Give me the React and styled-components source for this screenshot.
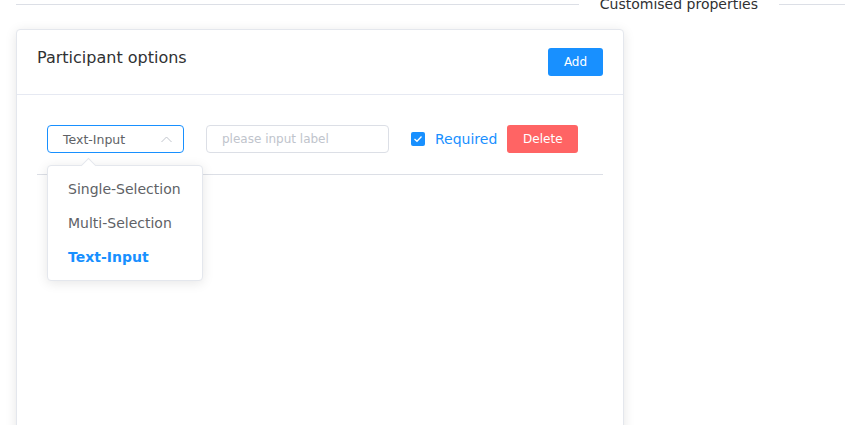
import styled, { createGlobalStyle } from "styled-components";

const GlobalStyle = createGlobalStyle`
  html, body {
    margin: 0;
    padding: 0;
    background: #fff;
    overflow: hidden;
  }
  body {
    font-family: "DejaVu Sans", Verdana, sans-serif;
    color: #303133;
  }
`;

const Page = styled.div`
  width: 845px;
  height: 425px;
  overflow: hidden;
`;

const Divider = styled.div`
  display: flex;
  align-items: center;
  height: 18px;
  margin-top: -5px;
  padding-left: 16px;
`;

const Line = styled.div`
  height: 1px;
  background: #dcdfe6;
  flex: ${(p) => (p.$grow ? 1 : "none")};
  width: ${(p) => (p.$grow ? "auto" : "66px")};
`;

const DividerText = styled.span`
  padding: 0 21px;
  font-size: 14px;
  line-height: 18px;
  color: #303133;
  white-space: nowrap;
`;

const Card = styled.div`
  margin: 16px 0 0 16px;
  width: 606px;
  height: 420px;
  border: 1px solid #e4e7ed;
  border-radius: 4px;
  background: #fff;
  box-shadow: 0 2px 12px rgba(0, 0, 0, 0.1);
`;

const CardHeader = styled.div`
  display: flex;
  justify-content: space-between;
  align-items: flex-start;
  padding: 16px 20px 18px;
  border-bottom: 1px solid #e6e9f2;
`;

const Title = styled.div`
  font-size: 16px;
  line-height: 24px;
  color: #303133;
`;

const Button = styled.button`
  border: none;
  border-radius: 3px;
  color: #fff;
  font-family: inherit;
  font-size: 12px;
  height: 28px;
  padding: 0;
  width: ${(p) => p.$w}px;
  margin-top: ${(p) => p.$mt || 0}px;
  background: ${(p) => (p.$danger ? "#ff6464" : "#1890ff")};
  cursor: pointer;
`;

const CardBody = styled.div`
  padding: 20px;
`;

const Row = styled.div`
  position: relative;
  display: flex;
  align-items: center;
  padding: 10px 10px 21px;
  border-bottom: 1px solid #dcdfe6;
`;

const Select = styled.div`
  position: relative;
  box-sizing: border-box;
  width: 137px;
  height: 28px;
  border: 1px solid #1890ff;
  border-radius: 4px;
  display: flex;
  align-items: center;
  justify-content: space-between;
  padding: 0 11px 0 15px;
  font-size: 12.5px;
  color: #606266;
`;

const Input = styled.input`
  box-sizing: border-box;
  width: 183px;
  height: 28px;
  margin-left: 22px;
  border: 1px solid #dcdfe6;
  border-radius: 4px;
  padding: 0 15px;
  font-family: inherit;
  font-size: 12px;
  outline: none;
  &::placeholder {
    color: #c0c4cc;
  }
`;

const CheckLabel = styled.label`
  display: flex;
  align-items: center;
  gap: 10px;
  margin: 0 10px 0 22px;
  font-size: 14px;
  color: #1890ff;
`;

const Box = styled.span`
  width: 14px;
  height: 14px;
  border-radius: 2px;
  background: #1890ff;
  display: flex;
  align-items: center;
  justify-content: center;
`;

const Dropdown = styled.ul`
  position: absolute;
  left: 10px;
  top: 50px;
  z-index: 2;
  box-sizing: border-box;
  width: 156px;
  margin: 0;
  padding: 6px 0;
  list-style: none;
  background: #fff;
  border: 1px solid #e4e7ed;
  border-radius: 4px;
  box-shadow: 0 2px 12px rgba(0, 0, 0, 0.1);

  &::before {
    content: "";
    position: absolute;
    top: -6px;
    left: 35px;
    width: 10px;
    height: 10px;
    background: #fff;
    border-left: 1px solid #e4e7ed;
    border-top: 1px solid #e4e7ed;
    transform: rotate(45deg);
  }
`;

const Option = styled.li`
  height: 34px;
  line-height: 34px;
  padding: 0 20px;
  font-size: 14px;
  color: ${(p) => (p.$active ? "#1890ff" : "#606266")};
  font-weight: ${(p) => (p.$active ? 700 : 400)};
`;

const options = ["Single-Selection", "Multi-Selection", "Text-Input"];

export default function App() {
  return (
    <Page>
      <GlobalStyle />
      <Divider>
        <Line $grow />
        <DividerText>Customised properties</DividerText>
        <Line />
      </Divider>
      <Card>
        <CardHeader>
          <Title>Participant options</Title>
          <Button $w={55} $mt={2}>Add</Button>
        </CardHeader>
        <CardBody>
          <Row>
            <Select>
              <span>Text-Input</span>
              <svg width="11" height="7" viewBox="0 0 11 7">
                <path d="M0.5 6 L5.5 1 L10.5 6" fill="none" stroke="#c0c4cc" strokeWidth="1" />
              </svg>
            </Select>
            <Input placeholder="please input label" />
            <CheckLabel>
              <Box>
                <svg width="10" height="8" viewBox="0 0 10 8">
                  <path d="M1.5 4 L4 6.3 L8.5 1.5" fill="none" stroke="#fff" strokeWidth="1.3" />
                </svg>
              </Box>
              Required
            </CheckLabel>
            <Button $w={71} $danger>Delete</Button>
            <Dropdown>
              {options.map((o) => (
                <Option key={o} $active={o === "Text-Input"}>{o}</Option>
              ))}
            </Dropdown>
          </Row>
        </CardBody>
      </Card>
    </Page>
  );
}
